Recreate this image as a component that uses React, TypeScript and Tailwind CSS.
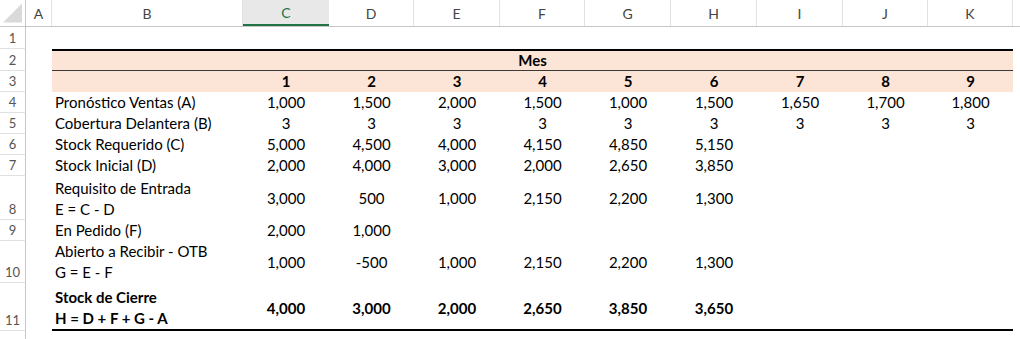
import React from "react";

const cols = ["C", "D", "E", "F", "G", "H", "I", "J", "K"];
const colW = ["w-[86px]", "w-[85px]", "w-[86px]", "w-[85px]", "w-[86px]", "w-[86px]", "w-[86px]", "w-[85px]", "w-[85px]"];

type Row = { n: number; h: string; label: string[]; vals: string[]; bold?: boolean };

const rows: Row[] = [
  { n: 4, h: "h-[21px]", label: ["Pronóstico Ventas (A)"], vals: ["1,000", "1,500", "2,000", "1,500", "1,000", "1,500", "1,650", "1,700", "1,800"] },
  { n: 5, h: "h-[21px]", label: ["Cobertura Delantera (B)"], vals: ["3", "3", "3", "3", "3", "3", "3", "3", "3"] },
  { n: 6, h: "h-[21px]", label: ["Stock Requerido (C)"], vals: ["5,000", "4,500", "4,000", "4,150", "4,850", "5,150"] },
  { n: 7, h: "h-[21px]", label: ["Stock Inicial (D)"], vals: ["2,000", "4,000", "3,000", "2,000", "2,650", "3,850"] },
  { n: 8, h: "h-[44px]", label: ["Requisito de Entrada", "E = C - D"], vals: ["3,000", "500", "1,000", "2,150", "2,200", "1,300"] },
  { n: 9, h: "h-[21px]", label: ["En Pedido (F)"], vals: ["2,000", "1,000"] },
  { n: 10, h: "h-[42px]", label: ["Abierto a Recibir - OTB", "G = E - F"], vals: ["1,000", "-500", "1,000", "2,150", "2,200", "1,300"] },
  { n: 11, h: "h-[48px]", label: ["Stock de Cierre", "H = D + F + G - A"], vals: ["4,000", "3,000", "2,000", "2,650", "3,850", "3,650"], bold: true },
];

function RowHead({ n, h }: { n?: number; h: string }) {
  return (
    <div className={`${h} w-[26px] shrink-0 border-r border-b border-r-[#c6c6c6] border-b-[#e1e1e1] flex items-end justify-center pb-[1px] text-[13px] text-[#555] leading-[18px]`}>
      {n}
    </div>
  );
}

export default function App() {
  return (
    <div className="w-[1020px] h-[339px] overflow-hidden bg-white text-black font-['Lato',_'Liberation_Sans',_sans-serif]">
      {/* column headers */}
      <div className="flex h-[27px] border-b border-[#c6c6c6] text-[14px] text-[#444]">
        <div className="w-[26px] shrink-0 border-r border-[#c6c6c6] flex items-end justify-end p-[3px]">
          <svg width="20" height="20" viewBox="0 0 20 20">
            <polygon points="20,0 20,20 0,20" fill="#d9d9d9" />
          </svg>
        </div>
        <div className="w-[26px] shrink-0 border-r border-[#e1e1e1] flex items-center justify-center">A</div>
        <div className="w-[191px] shrink-0 border-r border-[#e1e1e1] flex items-center justify-center">B</div>
        {cols.map((c, i) =>
          c === "C" ? (
            <div key={c} className={`${colW[i]} shrink-0 bg-[#e8e8e8] border-b-2 border-[#217346] text-[#217346] flex items-center justify-center pt-[1px]`}>
              {c}
            </div>
          ) : (
            <div key={c} className={`${colW[i]} shrink-0 border-r border-[#e1e1e1] flex items-center justify-center`}>
              {c}
            </div>
          )
        )}
        <div className="flex-1" />
      </div>

      {/* row 1 */}
      <div className="flex">
        <RowHead n={1} h="h-[22px]" />
      </div>

      {/* row 2 */}
      <div className="flex">
        <RowHead n={2} h="h-[22px]" />
        <div className="w-[26px] shrink-0" />
        <div className="w-[961px] h-[22px] shrink-0 bg-[#fce4d6] border-t-2 border-b border-t-black border-b-[#3a3a3a] flex items-center justify-center font-bold text-[15px]">
          Mes
        </div>
      </div>

      {/* row 3 */}
      <div className="flex">
        <RowHead n={3} h="h-[21px]" />
        <div className="w-[26px] shrink-0" />
        <div className="flex bg-[#fce4d6] h-[21px] shrink-0">
          <div className="w-[191px] shrink-0" />
          {cols.map((c, i) => (
            <div key={c} className={`${colW[i]} shrink-0 flex items-center justify-center font-bold text-[15px]`}>
              {i + 1}
            </div>
          ))}
        </div>
      </div>

      {rows.map((r) => (
        <div key={r.n} className="flex">
          <RowHead n={r.n} h={r.h} />
          <div className="w-[26px] shrink-0" />
          <div className={`flex shrink-0 ${r.h} text-[15px] ${r.bold ? "font-bold border-b-2 border-black" : ""}`}>
            <div className="w-[191px] shrink-0 flex flex-col justify-end pl-[3px] leading-[21px]">
              {r.label.map((l) => (
                <span key={l}>{l}</span>
              ))}
            </div>
            {cols.map((c, i) => (
              <div key={c} className={`${colW[i]} shrink-0 flex items-center justify-center ${r.bold ? "pt-[5px]" : ""}`}>
                {r.vals[i] ?? ""}
              </div>
            ))}
          </div>
        </div>
      ))}

      {/* row 12 partial */}
      <div className="flex">
        <RowHead h="h-[21px]" />
      </div>
    </div>
  );
}
